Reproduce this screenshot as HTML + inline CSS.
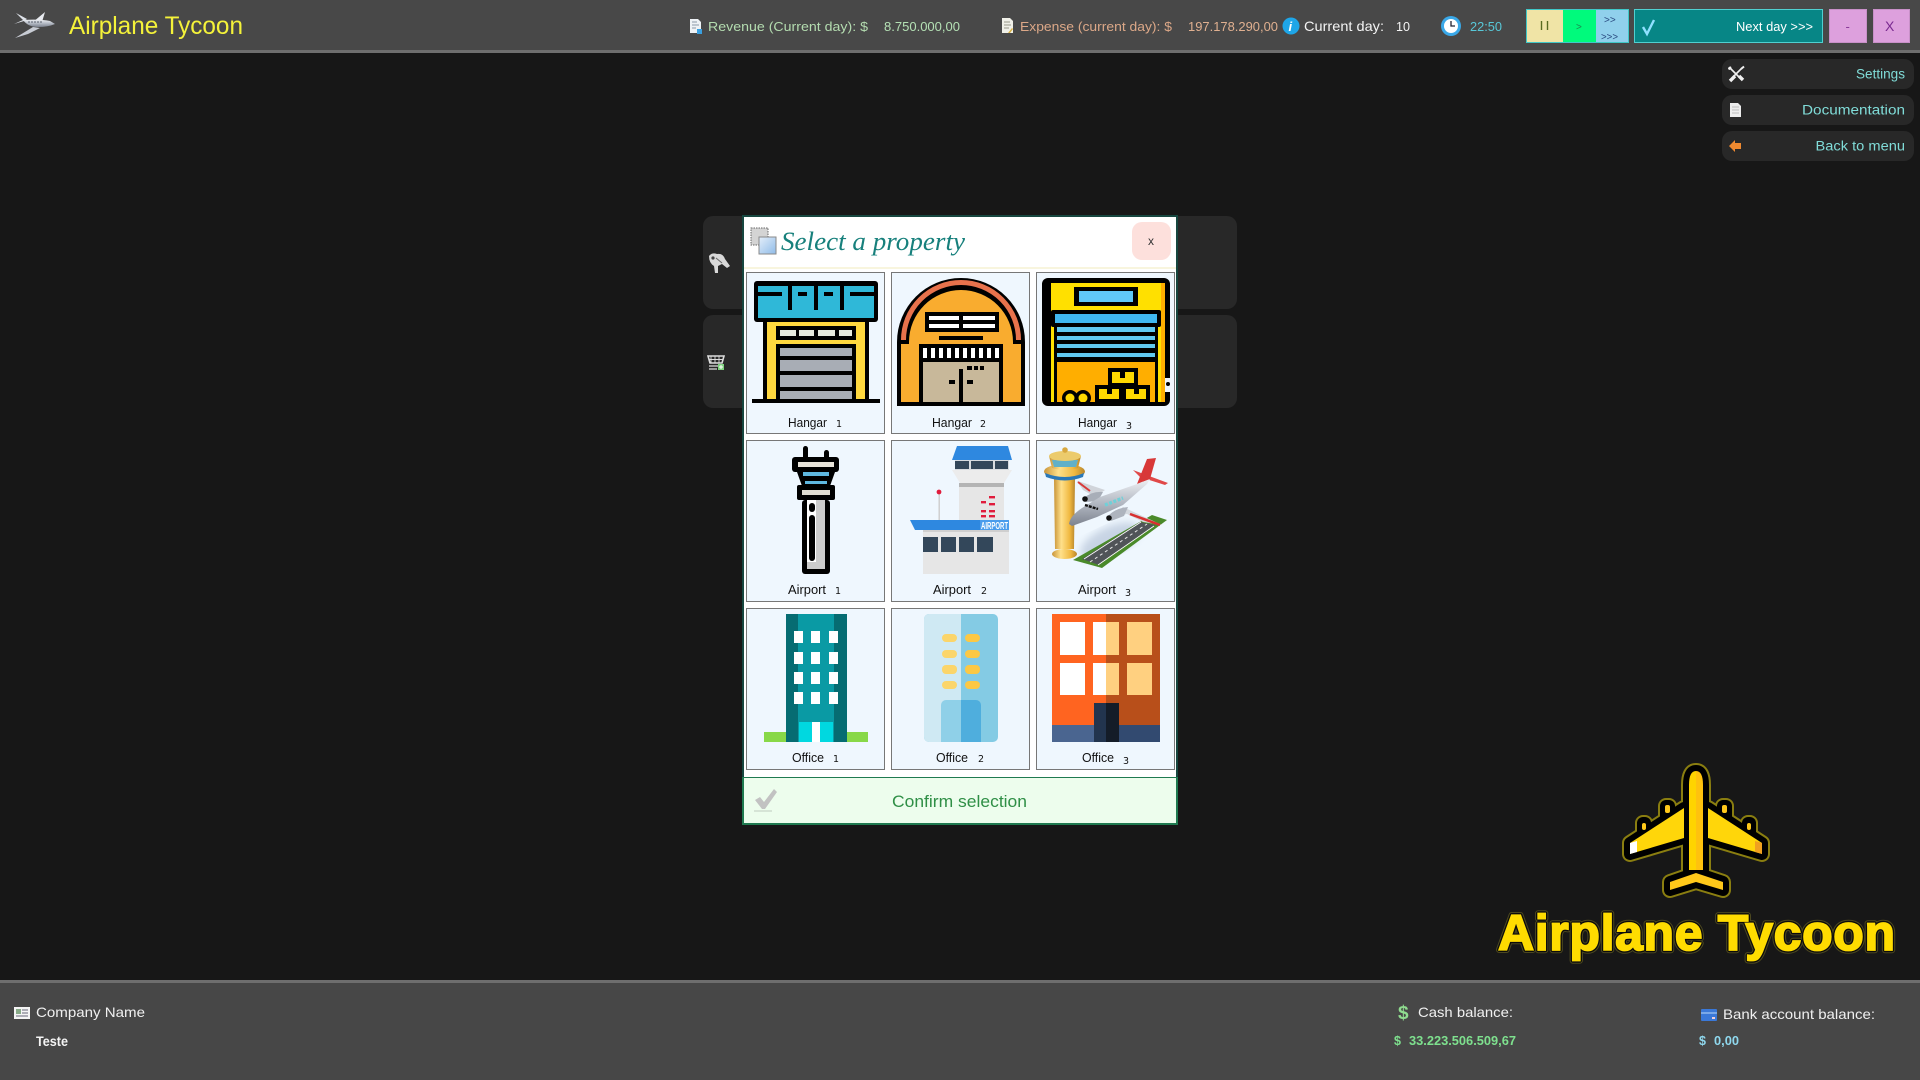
<!DOCTYPE html>
<html lang="en"><head><meta charset="utf-8"><title>Airplane Tycoon</title>
<style>
html,body{margin:0;padding:0;width:1920px;height:1080px;overflow:hidden;background:#171717}
.b{position:absolute;box-sizing:border-box}
svg{position:absolute;left:0;top:0}
text{font-family:"Liberation Sans",sans-serif}
text.d{font-family:"DejaVu Sans",sans-serif;font-size:9.5px}
.card{background:#eff7fe;border:1px solid #777;width:139px;height:162px}
</style></head><body>
<div class="b" style="left:0;top:0;width:1920px;height:50px;background:#484848"></div>
<div class="b" style="left:0;top:50px;width:1920px;height:3px;background:#6e6e6e"></div>
<div class="b" style="left:0;top:980px;width:1920px;height:100px;background:#474747;border-top:3px solid #6e6e6e"></div>
<div class="b" style="left:1526px;top:9px;width:37px;height:34px;background:#f0e4a6;border:1px solid #40c8c8;border-right:0"></div>
<div class="b" style="left:1563px;top:9px;width:33px;height:34px;background:#00fa7c;border-top:1px solid #40c8c8;border-bottom:1px solid #40c8c8"></div>
<div class="b" style="left:1596px;top:9px;width:33px;height:34px;background:#90d0ec;border:1px solid #40c8c8;border-left:0"></div>
<div class="b" style="left:1634px;top:9px;width:189px;height:34px;background:#078686;border:1px solid #50d0d0"></div>
<div class="b" style="left:1829px;top:9px;width:38px;height:34px;background:#dda0dd;border:1px solid #c890c8"></div>
<div class="b" style="left:1873px;top:9px;width:37px;height:34px;background:#dda0dd;border:1px solid #c890c8"></div>
<div class="b" style="left:1722px;top:59px;width:192px;height:30px;background:#282828;border-radius:10px"></div>
<div class="b" style="left:1722px;top:95px;width:192px;height:30px;background:#282828;border-radius:10px"></div>
<div class="b" style="left:1722px;top:131px;width:192px;height:30px;background:#282828;border-radius:10px"></div>
<div class="b" style="left:703px;top:216px;width:534px;height:93px;background:#282828;border-radius:10px"></div>
<div class="b" style="left:703px;top:315px;width:534px;height:93px;background:#282828;border-radius:10px"></div>
<div class="b" style="left:742px;top:215px;width:436px;height:610px;background:#fff;border:2px solid #16463f"></div>
<div class="b" style="left:744px;top:267px;width:432px;height:2px;background:#f8f5de"></div>
<div class="b" style="left:1132px;top:222px;width:39px;height:38px;background:#fde0dc;border-radius:10px"></div>
<div class="b card" style="left:746px;top:272px"></div><div class="b card" style="left:891px;top:272px"></div><div class="b card" style="left:1036px;top:272px"></div>
<div class="b card" style="left:746px;top:440px"></div><div class="b card" style="left:891px;top:440px"></div><div class="b card" style="left:1036px;top:440px"></div>
<div class="b card" style="left:746px;top:608px"></div><div class="b card" style="left:891px;top:608px"></div><div class="b card" style="left:1036px;top:608px"></div>
<div class="b" style="left:742px;top:777px;width:436px;height:48px;background:#edfded;border:2px solid #1f7a50;border-top-width:1px"></div>

<svg width="1920" height="1080" viewBox="0 0 1920 1080" xmlns="http://www.w3.org/2000/svg">
<defs>
<linearGradient id="gold" x1="0" x2="1" y1="0" y2="0"><stop offset="0" stop-color="#c9953a"/><stop offset=".35" stop-color="#ffe08a"/><stop offset=".75" stop-color="#f0b840"/><stop offset="1" stop-color="#b8862c"/></linearGradient>
<linearGradient id="silver" x1="0" x2="0" y1="0" y2="1"><stop offset="0" stop-color="#eef0f4"/><stop offset=".5" stop-color="#b4bac4"/><stop offset="1" stop-color="#7c828e"/></linearGradient>
<linearGradient id="sq" x1="0" x2="1" y1="0" y2="1"><stop offset="0" stop-color="#e4eefa"/><stop offset="1" stop-color="#8fbbe8"/></linearGradient>
<filter id="bl"><feGaussianBlur stdDeviation="4"/></filter>
<g id="sil">
<path d="M1689 870V785Q1689 771 1696 771Q1703 771 1703 785V870Z"/>
<path d="M1684 808V838L1630 854V843Z"/><path d="M1708 808V838L1762 854V843Z"/>
<path d="M1670 882L1696 873L1723 882V890L1696 882L1670 890Z"/>
<rect x="1666" y="806" width="3" height="16"/><rect x="1643" y="823" width="2" height="14"/>
<rect x="1723" y="806" width="3" height="16"/><rect x="1748" y="823" width="2" height="14"/>
</g>
</defs>

<!-- top-left logo -->
<g>
<path d="M16 13L27 19L24 21L14 24L23 20Z" fill="#dfe3ea"/>
<path d="M33 22L45 12L42 22Z" fill="#e8ebf0"/>
<path d="M33 27L15 38L28 34L40 28Z" fill="#c8ccd4"/>
<path d="M23 20Q40 19 50 21L55 24Q48 27 38 27Q28 27 23 20Z" fill="url(#silver)"/>
<path d="M28 22h14" stroke="#59606c" stroke-width="1" stroke-dasharray="2 1"/>
</g>
<text x="69" y="34" font-size="25" fill="#f4f23a" textLength="174" lengthAdjust="spacingAndGlyphs">Airplane Tycoon</text>

<!-- revenue -->
<path d="M690 19h8l3 3v11h-11z" fill="#eef2f6"/><path d="M697 29h5v5h-5z" fill="#3aa0e0"/><path d="M692 22h5M692 25h7M692 28h4" stroke="#8a98a8"/>
<text x="708" y="31" font-size="13" fill="#b4dcb0" textLength="160" lengthAdjust="spacingAndGlyphs">Revenue (Current day): $</text>
<text x="884" y="31" font-size="13" fill="#b4e0b4" textLength="76" lengthAdjust="spacingAndGlyphs">8.750.000,00</text>
<path d="M1002 18h8l3 3v12h-11z" fill="#f0f0e8"/><path d="M1004 22h6M1004 25h7M1004 28h5" stroke="#98988a"/><path d="M1008 33l4-5 1 1-3 4z" fill="#d8b040"/>
<text x="1020" y="31" font-size="13" fill="#dca888" textLength="152" lengthAdjust="spacingAndGlyphs">Expense (current day): $</text>
<text x="1188" y="31" font-size="13" fill="#e0b090" textLength="90" lengthAdjust="spacingAndGlyphs">197.178.290,00</text>
<circle cx="1291" cy="26" r="8.5" fill="#1ea6e8"/><text x="1288.5" y="31" font-size="13" font-weight="bold" font-style="italic" fill="#fff">i</text>
<text x="1304" y="31" font-size="14" fill="#f4f4f4" textLength="80" lengthAdjust="spacingAndGlyphs">Current day:</text>
<text x="1396" y="31" font-size="13" fill="#f4f4f4" textLength="14" lengthAdjust="spacingAndGlyphs">10</text>
<circle cx="1451" cy="26" r="10" fill="#3aa8e8"/><circle cx="1451" cy="26" r="7" fill="#fff"/><path d="M1451 21v5h4" stroke="#223" stroke-width="1.3" fill="none"/>
<text x="1470" y="31" font-size="13" fill="#58c8d8" textLength="32" lengthAdjust="spacingAndGlyphs">22:50</text>

<!-- top controls -->
<path d="M1541.500 21v9M1547.500 21v9" stroke="#5a6a20" stroke-width="1.4"/>
<text x="1576" y="30" font-size="10" fill="#1a8a50">&gt;</text>
<text x="1604" y="23" font-size="10" fill="#2a4a80">&gt;&gt;</text>
<text x="1601" y="40" font-size="10" fill="#2a4a80" textLength="17" lengthAdjust="spacingAndGlyphs">&gt;&gt;&gt;</text>
<path d="M1643 27l4 7 7-14" stroke="#8fe0ff" stroke-width="2.4" fill="none"/>
<text x="1736" y="31" font-size="13" fill="#fff" textLength="77" lengthAdjust="spacingAndGlyphs">Next day &gt;&gt;&gt;</text>
<text x="1845.500" y="31" font-size="13" fill="#8a3a9a">-</text>
<text x="1885" y="31" font-size="14" fill="#7a2a90">X</text>

<!-- menu -->
<path d="M1731 69L1741 79M1742 68L1732 78" stroke="#f0f0f0" stroke-width="1.600"/>
<path d="M1730 81L1735 76M1743 80L1739 76" stroke="#f0f0f0" stroke-width="3.400"/>
<path d="M1728 69a2.500 2.500 0 0 1 3-2.500l.8 2.500-2.500 1z" fill="#f0f0f0"/><path d="M1741 69l3-2.500" stroke="#f0f0f0" stroke-width="2"/>
<text x="1856" y="78.5" font-size="13.5" fill="#80dcd8" textLength="49" lengthAdjust="spacingAndGlyphs">Settings</text>
<path d="M1730 103h8l3 3v11h-11z" fill="#ececec"/><path d="M1732 107h7M1732 110h7M1732 113h7" stroke="#bbb"/>
<text x="1802" y="114.5" font-size="13.5" fill="#80dcd8" textLength="103" lengthAdjust="spacingAndGlyphs">Documentation</text>
<path d="M1729 146l6-6v3h6v6h-6v3z" fill="#f08a30"/>
<text x="1815.5" y="150.5" font-size="13.5" fill="#80dcd8" textLength="89.5" lengthAdjust="spacingAndGlyphs">Back to menu</text>

<!-- background panel icons -->
<path d="M709 256Q712 252 717 254Q723 253 725 259L730 266L727 268L722 264L718 266L718 273L715 273L714 266Q709 263 709 256Z" fill="#d8d8d8"/><circle cx="713" cy="258" r="1.600" fill="#444"/><path d="M716 258l6 5" stroke="#666" stroke-width="1"/>
<path d="M708 356h16l-2 7h-12z" fill="none" stroke="#dcdcdc" stroke-width="1.600"/><path d="M711 356v7M715 356v7M719 356v7M709 359.500h14" stroke="#dcdcdc" stroke-width=".9"/><path d="M709 366h9M709 369h8" stroke="#ddd" stroke-width="1.200"/><rect x="718" y="364" width="6" height="6" fill="#7ed07e"/><path d="M721 365v4M719 367h4" stroke="#fff"/>

<!-- modal head -->
<rect x="751" y="228" width="17" height="17" fill="#d4d4d4" stroke="#666" stroke-dasharray="1.5 1"/>
<rect x="759" y="237" width="17" height="17" fill="url(#sq)" stroke="#8a8a8a"/>
<text x="781" y="250" font-style="italic" font-size="26" fill="#17807c" textLength="184" lengthAdjust="spacingAndGlyphs" style="font-family:'Liberation Serif',serif">Select a property</text>
<text x="1148" y="245" font-size="12" fill="#333">x</text>

<!-- Hangar 1 -->
<rect x="754" y="281" width="124" height="41" rx="3" fill="#000"/><rect x="758" y="286" width="116" height="32" fill="#2fb8d8"/>
<g fill="#000"><rect x="758" y="292" width="24" height="4"/><rect x="788" y="283" width="4" height="27"/><rect x="798" y="292" width="9" height="4"/><rect x="814" y="283" width="4" height="27"/><rect x="824" y="292" width="9" height="4"/><rect x="840" y="283" width="4" height="27"/><rect x="850" y="292" width="24" height="4"/>
<rect x="763" y="322" width="106" height="78"/><rect x="752" y="399" width="128" height="4"/></g>
<rect x="767" y="322" width="98" height="77" fill="#ffd83f"/><rect x="776" y="326" width="80" height="14" fill="#000"/><rect x="776" y="344" width="80" height="55" fill="#000"/>
<g fill="#e6eade"><rect x="780" y="330" width="16" height="6"/><rect x="799" y="330" width="15" height="6"/><rect x="818" y="330" width="17" height="6"/><rect x="839" y="330" width="13" height="6"/></g>
<g fill="#a8adb5"><rect x="780" y="348" width="72" height="8"/><rect x="780" y="360" width="72" height="11"/><rect x="780" y="375" width="72" height="12"/><rect x="780" y="391" width="72" height="8"/></g>

<!-- Hangar 2 -->
<path d="M897 406V342A64 64 0 0 1 1025 342V406Z" fill="#000"/>
<path d="M903.500 340A57.500 57.500 0 0 1 1018.500 340" fill="none" stroke="#e8724c" stroke-width="5"/>
<path d="M901 402V344H909V342A52 52 0 0 1 1013 342V344H1021V402Z" fill="#f9ac2f"/>
<rect x="925" y="312" width="74" height="20"/>
<g fill="#fff"><rect x="929" y="316" width="30" height="4"/><rect x="963" y="316" width="32" height="4"/><rect x="929" y="324" width="30" height="4"/><rect x="963" y="324" width="32" height="4"/></g>
<rect x="939" y="336" width="44" height="4"/><rect x="919" y="344" width="84" height="62"/>
<g fill="#fff"><rect x="923" y="348" width="4" height="10"/><rect x="931" y="348" width="4" height="10"/><rect x="939" y="348" width="4" height="10"/><rect x="947" y="348" width="4" height="10"/><rect x="955" y="348" width="4" height="10"/><rect x="963" y="348" width="4" height="10"/><rect x="971" y="348" width="4" height="10"/><rect x="979" y="348" width="4" height="10"/><rect x="987" y="348" width="4" height="10"/><rect x="995" y="348" width="4" height="10"/></g>
<rect x="923" y="362" width="76" height="40" fill="#c8b89a"/>
<rect x="959" y="369" width="4" height="33"/><rect x="967" y="366" width="5" height="4"/><rect x="974" y="366" width="4" height="4"/><rect x="980" y="366" width="4" height="4"/><rect x="949" y="380" width="6" height="4"/><rect x="967" y="380" width="6" height="4"/>

<!-- Hangar 3 -->
<rect x="1042" y="278" width="128" height="128" rx="6" fill="#000"/>
<rect x="1051" y="283" width="114" height="119" fill="#ffe000"/><rect x="1161" y="283" width="4" height="119" fill="#ffae00"/>
<rect x="1165" y="378" width="6" height="14" fill="#eff7fe"/><circle cx="1168" cy="384" r="2" fill="#000"/>
<rect x="1074" y="287" width="64" height="19"/><rect x="1079" y="291" width="54" height="11" fill="#60c8f8"/>
<rect x="1054" y="327" width="104" height="75"/><rect x="1051" y="310" width="110" height="17" rx="2"/><rect x="1055" y="314" width="102" height="9" fill="#40b8f0"/>
<g fill="#60c8f0"><rect x="1057" y="327" width="98" height="5"/><rect x="1057" y="336" width="98" height="4"/><rect x="1057" y="344" width="98" height="4"/><rect x="1057" y="353" width="98" height="4"/></g>
<rect x="1057" y="362" width="98" height="40" fill="#ffae00"/>
<rect x="1108" y="368" width="30" height="18"/><rect x="1095" y="385" width="28" height="18"/><rect x="1122" y="385" width="28" height="18"/>
<g fill="#ffd800"><rect x="1112" y="372" width="22" height="11"/><rect x="1099" y="389" width="20" height="10"/><rect x="1126" y="389" width="20" height="10"/></g>
<rect x="1120" y="372" width="5" height="6"/><rect x="1107" y="389" width="5" height="5"/><rect x="1134" y="389" width="5" height="5"/>
<circle cx="1070" cy="398" r="8"/><circle cx="1083" cy="398" r="8"/><circle cx="1070" cy="398" r="4.500" fill="#ffd800"/><circle cx="1083" cy="398" r="4.500" fill="#ffd800"/>
<rect x="1060" y="402" width="34" height="4"/>

<!-- Airport 1 -->
<rect x="803" y="446" width="5" height="14" rx="2.500"/><rect x="824" y="450" width="5" height="10" rx="2.500"/>
<rect x="792" y="457" width="47" height="15" rx="3"/><rect x="798" y="462" width="36" height="5" fill="#e8e4da"/>
<path d="M797 472H835L830 486H802Z"/><rect x="803" y="472" width="26" height="4" fill="#5fb8e0"/><rect x="805" y="481" width="22" height="3" fill="#5fb8e0"/>
<rect x="797" y="485" width="38" height="15" rx="2"/><rect x="802" y="490" width="28" height="5" fill="#e0ddd2"/>
<rect x="802" y="500" width="28" height="74" rx="3"/><rect x="807" y="500" width="18" height="69" fill="#ccc"/><rect x="807" y="500" width="9" height="62" fill="#fff"/>
<rect x="809" y="503" width="6" height="9" rx="3"/><rect x="809" y="515" width="6" height="46" rx="3"/>

<!-- Airport 2 -->
<path d="M957 446H1008L1012 460H952Z" fill="#2e88e0"/>
<rect x="955" y="460" width="54" height="10" fill="#d8dce0"/>
<g fill="#33475a"><rect x="955" y="461" width="14" height="8"/><rect x="971" y="461" width="22" height="8"/><rect x="995" y="461" width="13" height="8"/></g>
<path d="M952 470H1012L1004 483H960Z" fill="#ececec"/>
<rect x="959" y="483" width="45" height="37" fill="#e6e6e6"/><rect x="959" y="483" width="45" height="4" fill="#b4b4b4"/>
<g fill="#e01c3c"><rect x="981" y="501" width="5" height="2.400"/><rect x="989" y="496" width="6" height="2.400"/><rect x="989" y="503" width="6" height="2.400"/><rect x="981" y="510" width="5" height="2.400"/><rect x="989" y="510" width="6" height="2.400"/><rect x="981" y="515" width="5" height="2.400"/><rect x="989" y="515" width="6" height="2.400"/></g>
<rect x="938.500" y="492" width="1.400" height="28" fill="#ccc"/><circle cx="939" cy="492" r="2.400" fill="#e01c3c"/>
<rect x="923" y="530" width="86" height="44" fill="#e6e6e6"/><rect x="923" y="530" width="86" height="2" fill="#cfcfcf"/>
<path d="M910 520H1009V530H915Z" fill="#2e88e0"/><rect x="980" y="520" width="29" height="10" fill="#4a9cec"/>
<text x="981" y="529" font-size="10" font-weight="bold" fill="#fff" textLength="27" lengthAdjust="spacingAndGlyphs">AIRPORT</text>
<g fill="#33475a"><rect x="923" y="537" width="15" height="15"/><rect x="941" y="537" width="15" height="15"/><rect x="959" y="537" width="15" height="15"/><rect x="977" y="537" width="16" height="15"/></g>

<!-- Airport 3 -->
<ellipse cx="1110" cy="541" rx="32" ry="14" fill="#c8d4e4" filter="url(#bl)" transform="rotate(-25 1110 541)"/>
<path d="M1073 560L1152 515L1167 520L1102 568Z" fill="#4a8a2a"/>
<path d="M1082 559L1140 522L1155 525L1099 565Z" fill="#505458"/>
<path d="M1090 562L1147 524" stroke="#e8e8e8" stroke-width="1" stroke-dasharray="3 3"/>
<path d="M1084 559L1141 522M1098 565L1154 526" stroke="#fff" stroke-width=".8"/>
<path d="M1054 479H1075L1074 549H1055Z" fill="url(#gold)"/>
<ellipse cx="1064.500" cy="554" rx="12.500" ry="5" fill="url(#gold)"/>
<ellipse cx="1064.500" cy="471.500" rx="20.500" ry="7.500" fill="url(#gold)"/>
<path d="M1045 473Q1065 481 1084 473L1083 477Q1065 484 1046 477Z" fill="#2a78b8"/>
<path d="M1049 456L1052 468Q1065 472 1078 468L1081 456Z" fill="url(#gold)"/>
<path d="M1052 460H1078L1076 467H1054Z" fill="#60b0c8"/>
<ellipse cx="1065" cy="456" rx="16" ry="5" fill="#eccb6c"/><circle cx="1065" cy="450" r="2.800" fill="#d8a840"/>
<path d="M1077 481L1081 482L1105 490L1095 497L1083 490Z" fill="#d0d4da"/><path d="M1078 482L1090 491" stroke="#d83838" stroke-width="2"/>
<path d="M1084 498Q1092 491 1103 492L1098 501L1086 502Z" fill="#a8aeb8"/><circle cx="1085" cy="499" r="2.800" fill="#111"/>
<path d="M1133 470L1168 483L1165 485L1140 477Z" fill="#e04848"/>
<path d="M1137 484L1147 459L1156 458L1150 479Z" fill="#d83838"/>
<path d="M1069 524Q1070 516 1082 508L1100 497L1137 484L1150 479L1147 484L1123 505L1097 517L1072 526Z" fill="url(#silver)"/>
<path d="M1105 505l18-7" stroke="#70d0d8" stroke-width="3.400" stroke-dasharray="3 1.500"/>
<path d="M1085 505l13 4" stroke="#111" stroke-width="2.400" stroke-dasharray="3 1"/>
<path d="M1123 507L1162 525L1143 522L1127 514L1112 517Z" fill="#d4d8de"/><path d="M1130 514L1160 525" stroke="#d83030" stroke-width="2.500"/>
<path d="M1109 515Q1116 508 1128 507L1124 516L1111 521Z" fill="#aeb4be"/><circle cx="1109" cy="518" r="2.800" fill="#111"/>

<!-- Office 1 -->
<rect x="764" y="732" width="22" height="10" fill="#88d848"/><rect x="847" y="732" width="21" height="10" fill="#88d848"/>
<rect x="786" y="614" width="61" height="128" fill="#066c72"/><rect x="798" y="614" width="36" height="128" fill="#0a9aa4"/>
<rect x="799" y="722" width="34" height="20" fill="#00d8e0"/><rect x="812" y="722" width="8" height="20" fill="#fff"/>
<g fill="#fff"><rect x="794" y="631" width="9" height="12"/><rect x="811" y="631" width="9" height="12"/><rect x="829" y="631" width="9" height="12"/><rect x="794" y="652" width="9" height="12"/><rect x="811" y="652" width="9" height="12"/><rect x="829" y="652" width="9" height="12"/><rect x="794" y="672" width="9" height="12"/><rect x="811" y="672" width="9" height="12"/><rect x="829" y="672" width="9" height="12"/><rect x="794" y="692" width="9" height="12"/><rect x="811" y="692" width="9" height="12"/><rect x="829" y="692" width="9" height="12"/></g>

<!-- Office 2 -->
<rect x="924" y="614" width="74" height="128" rx="5" fill="#84cbe4"/><path d="M961 614H929a5 5 0 0 0-5 5V737a5 5 0 0 0 5 5H961Z" fill="#cfe9f3"/>
<g fill="#fbd56a"><rect x="942" y="634" width="15" height="8" rx="4"/><rect x="942" y="650" width="15" height="8" rx="4"/><rect x="942" y="665" width="15" height="9" rx="4"/><rect x="942" y="681" width="15" height="8" rx="4"/></g>
<g fill="#fcc844"><rect x="965" y="634" width="15" height="8" rx="4"/><rect x="965" y="650" width="15" height="8" rx="4"/><rect x="965" y="665" width="15" height="9" rx="4"/><rect x="965" y="681" width="15" height="8" rx="4"/></g>
<path d="M941 742V705a5 5 0 0 1 5-5H961V742Z" fill="#8fd0e8"/><path d="M961 700H976a5 5 0 0 1 5 5V742H961Z" fill="#4faedd"/>

<!-- Office 3 -->
<rect x="1052" y="614" width="54" height="111" fill="#ff6420"/><rect x="1106" y="614" width="54" height="111" fill="#b84f1a"/>
<g fill="#fff"><rect x="1060" y="622" width="25" height="33"/><rect x="1093" y="622" width="13" height="33"/><rect x="1060" y="663" width="25" height="32"/><rect x="1093" y="663" width="13" height="32"/></g>
<g fill="#ffd080"><rect x="1106" y="622" width="13" height="33"/><rect x="1127" y="622" width="25" height="33"/><rect x="1106" y="663" width="13" height="32"/><rect x="1127" y="663" width="25" height="32"/></g>
<rect x="1052" y="725" width="54" height="17" fill="#4a6590"/><rect x="1106" y="725" width="54" height="17" fill="#324a70"/>
<rect x="1094" y="703" width="12" height="39" fill="#22344e"/><rect x="1106" y="703" width="13" height="39" fill="#141c28"/>

<!-- labels -->
<g font-size="13" fill="#111">
<text x="788" y="427" textLength="39" lengthAdjust="spacingAndGlyphs">Hangar</text><text class="d" x="836" y="427">1</text>
<text x="932" y="427" textLength="40" lengthAdjust="spacingAndGlyphs">Hangar</text><text class="d" x="980" y="427">2</text>
<text x="1078" y="427" textLength="39" lengthAdjust="spacingAndGlyphs">Hangar</text><text class="d" x="1126" y="429">3</text>
<text x="788" y="594" textLength="38" lengthAdjust="spacingAndGlyphs">Airport</text><text class="d" x="835" y="594">1</text>
<text x="933" y="594" textLength="38" lengthAdjust="spacingAndGlyphs">Airport</text><text class="d" x="981" y="594">2</text>
<text x="1078" y="594" textLength="38" lengthAdjust="spacingAndGlyphs">Airport</text><text class="d" x="1125" y="596">3</text>
<text x="792" y="762" textLength="32" lengthAdjust="spacingAndGlyphs">Office</text><text class="d" x="833" y="762">1</text>
<text x="936" y="762" textLength="32" lengthAdjust="spacingAndGlyphs">Office</text><text class="d" x="978" y="762">2</text>
<text x="1082" y="762" textLength="32" lengthAdjust="spacingAndGlyphs">Office</text><text class="d" x="1123" y="764">3</text>
</g>

<!-- confirm -->
<path d="M755 800L760 797L764 802L774 789L777 792L765 809H762Z" fill="#c2c2c2"/><rect x="754" y="810" width="18" height="2" fill="#d6e4d6"/>
<text x="892" y="807" font-size="17" fill="#2f8f46" textLength="135" lengthAdjust="spacingAndGlyphs">Confirm selection</text>

<!-- big logo -->
<use href="#sil" fill="#8a7e10" stroke="#8a7e10" stroke-width="16" stroke-linejoin="round" stroke-linecap="round"/>
<use href="#sil" fill="#000" stroke="#000" stroke-width="12" stroke-linejoin="round" stroke-linecap="round"/>
<path d="M1689 870V785Q1689 771 1696 771V870Z" fill="#ffd400"/>
<path d="M1696 771Q1703 771 1703 785V870H1696Z" fill="#ffc20e"/>
<g fill="#ffd60a"><path d="M1684 808V838L1630 854V843Z"/><path d="M1708 808V838L1762 854V843Z"/></g>
<g fill="#ffc81a"><rect x="1665" y="805" width="5" height="8" rx="2"/><rect x="1642" y="823" width="4" height="7" rx="2"/><rect x="1722" y="805" width="5" height="8" rx="2"/><rect x="1747" y="823" width="4" height="7" rx="2"/></g>
<path d="M1630 843L1637 841V852L1630 854Z" fill="#fff"/><path d="M1762 843L1755 841V852L1762 854Z" fill="#f0a020"/>
<path d="M1670 882L1696 873L1723 882V890L1696 882L1670 890Z" fill="#ffc81a"/>
<text x="1498" y="950" font-size="50" font-weight="bold" textLength="397" fill="none" stroke="#4c4820" stroke-width="6.500" stroke-linejoin="round">Airplane Tycoon</text>
<text x="1498" y="950" font-size="50" font-weight="bold" textLength="397" fill="none" stroke="#0c0c0c" stroke-width="4.500" stroke-linejoin="round">Airplane Tycoon</text>
<text x="1498" y="950" font-size="50" font-weight="bold" textLength="397" fill="#ffdc00" stroke="#ffdc00" stroke-width="1.800">Airplane Tycoon</text>

<!-- footer -->
<rect x="14" y="1007" width="16" height="12" fill="#f4f4f4"/><rect x="16" y="1009" width="5" height="5" fill="#88aa88"/><path d="M22 1010h6M22 1013h6M16 1016h12" stroke="#667" stroke-width="1"/>
<text x="36" y="1017" font-size="14" fill="#f0f0f0" textLength="109" lengthAdjust="spacingAndGlyphs">Company Name</text>
<text x="36" y="1046" font-size="14" font-weight="bold" fill="#f4f4f4" textLength="32" lengthAdjust="spacingAndGlyphs">Teste</text>
<text x="1398" y="1019" font-size="19" font-weight="bold" fill="#8fdc8f">$</text>
<text x="1418" y="1017" font-size="14" fill="#f0f0f0" textLength="95" lengthAdjust="spacingAndGlyphs">Cash balance:</text>
<text x="1394" y="1045" font-size="12.500" font-weight="bold" fill="#7ee08e">$</text>
<text x="1409" y="1045" font-size="12.500" font-weight="bold" fill="#7ee08e" textLength="107" lengthAdjust="spacingAndGlyphs">33.223.506.509,67</text>
<rect x="1701" y="1009" width="16" height="12" rx="1" fill="#3a78d8"/><rect x="1701" y="1012" width="16" height="2" fill="#7aa8e8"/><rect x="1712" y="1017" width="3" height="2" fill="#f0d0d8"/>
<text x="1723" y="1019" font-size="14" fill="#f0f0f0" textLength="152" lengthAdjust="spacingAndGlyphs">Bank account balance:</text>
<text x="1699" y="1045" font-size="12.500" font-weight="bold" fill="#8fd8ee">$</text>
<text x="1714" y="1045" font-size="12.500" font-weight="bold" fill="#8fd8ee" textLength="25" lengthAdjust="spacingAndGlyphs">0,00</text>
</svg>
</body></html>
